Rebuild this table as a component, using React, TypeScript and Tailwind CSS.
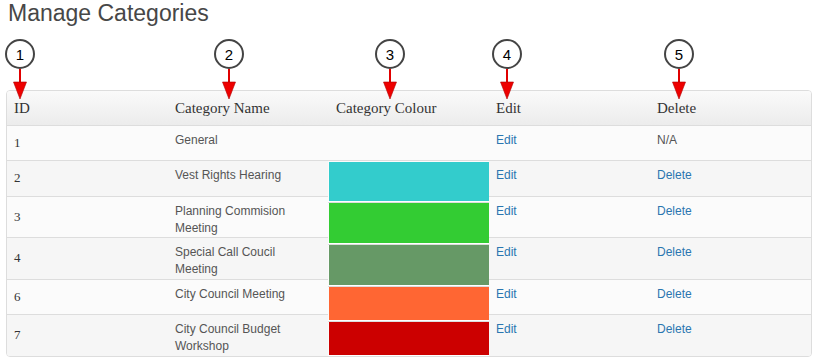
import React from 'react';

type Category = {
  id: number;
  name: string;
  colour?: string;
  swatchHeight?: number;
  deletable: boolean;
};

const categories: Category[] = [
  { id: 1, name: 'General', deletable: false },
  { id: 2, name: 'Vest Rights Hearing', colour: '#33cccc', swatchHeight: 39, deletable: true },
  { id: 3, name: 'Planning Commision Meeting', colour: '#33cc33', swatchHeight: 40, deletable: true },
  { id: 4, name: 'Special Call Coucil Meeting', colour: '#669966', swatchHeight: 40, deletable: true },
  { id: 6, name: 'City Council Meeting', colour: '#ff6633', swatchHeight: 33, deletable: true },
  { id: 7, name: 'City Council Budget Workshop', colour: '#cc0000', swatchHeight: 33, deletable: true },
];

// callout markers drawn over the page
const markers = [
  { n: 1, x: 20 },
  { n: 2, x: 229 },
  { n: 3, x: 390 },
  { n: 4, x: 507 },
  { n: 5, x: 679 },
];

function Marker({ n, x }: { n: number; x: number }) {
  return (
    <div className="absolute top-[39px] flex flex-col items-center w-[30px]" style={{ left: x - 15 }}>
      <div className="w-[30px] h-[30px] rounded-full border-2 border-[#444] bg-white flex items-center justify-center text-[15px] leading-none text-black font-['Liberation_Sans',sans-serif]">
        {n}
      </div>
      <svg width="16" height="30" viewBox="0 0 16 30" className="block">
        <line x1="8" y1="0" x2="8" y2="14" stroke="#e00000" strokeWidth="2" />
        <polygon points="1.5,13 14.5,13 8,30" fill="#ee0000" stroke="#b00000" strokeWidth="0.6" />
      </svg>
    </div>
  );
}

const rowHeights = 'grid-rows-[35px_36px_41px_42px_35px_42px]';
const cols = 'grid-cols-[160px_161px_161px_160px_1fr]';

export default function App() {
  return (
    <div className="relative w-[814px] h-[357px] overflow-hidden bg-white font-['Liberation_Sans',Arial,sans-serif]">
      <h1 className="ml-[8px] mt-[2px] text-[23px] leading-[22px] font-normal text-[#474747]">
        Manage Categories
      </h1>

      {/* Table */}
      <div className="ml-[6px] mt-[66px] w-[806px] border border-[#dddddd] rounded-[4px] overflow-hidden">
        {/* Header */}
        <div
          className={`grid ${cols} h-[34px] items-center bg-gradient-to-b from-[#fafafa] to-[#ececec] text-[15px] leading-[20px] text-[#333] font-['Liberation_Serif',Georgia,serif]`}
        >
          <div className="pl-[7px]">ID</div>
          <div className="pl-2">Category Name</div>
          <div className="pl-2">Category Colour</div>
          <div className="pl-[7px]">Edit</div>
          <div className="pl-2">Delete</div>
        </div>

        {/* Body */}
        <div className={`grid ${cols} ${rowHeights} text-[12px] leading-[16.5px]`}>
          {categories.map((c, i) => {
            const bg = i % 2 === 0 ? 'bg-[#fbfbfb]' : 'bg-[#f6f6f6]';
            return (
              <React.Fragment key={c.id}>
                <div
                  className={`${bg} border-t border-[#dddddd] pl-[7px] flex items-center text-[13px] text-[#333] font-['Liberation_Serif',Georgia,serif]`}
                  style={{ gridRow: i + 1, gridColumn: 1 }}
                >
                  {c.id}
                </div>
                <div
                  className={`${bg} border-t border-[#dddddd] pl-2 pr-4 pt-[6px] text-[#555]`}
                  style={{ gridRow: i + 1, gridColumn: 2 }}
                >
                  {c.name}
                </div>
                {!c.colour && (
                  <div className={`${bg} border-t border-[#dddddd]`} style={{ gridRow: i + 1, gridColumn: 3 }} />
                )}
                <div
                  className={`${bg} border-t border-[#dddddd] pl-[7px] pt-[6px]`}
                  style={{ gridRow: i + 1, gridColumn: 4 }}
                >
                  <a className="text-[#2a76b0]">Edit</a>
                </div>
                <div
                  className={`${bg} border-t border-[#dddddd] pl-2 pt-[6px]`}
                  style={{ gridRow: i + 1, gridColumn: 5 }}
                >
                  {c.deletable ? <a className="text-[#2a76b0]">Delete</a> : <span className="text-[#555]">N/A</span>}
                </div>
              </React.Fragment>
            );
          })}

          {/* colour swatches, stacked in one column */}
          <div className="col-start-3 row-start-2 row-span-5 border-t border-[#dddddd] bg-[#fbfbfb] pt-px flex flex-col">
            {categories
              .filter((c) => c.colour)
              .map((c) => (
                <div key={c.id} className="border-b border-[#dddddd]">
                  <div className="border-b border-white">
                    <div className="ml-px" style={{ height: c.swatchHeight, backgroundColor: c.colour }} />
                  </div>
                </div>
              ))}
          </div>
        </div>
      </div>

      {markers.map((m) => (
        <Marker key={m.n} n={m.n} x={m.x} />
      ))}
    </div>
  );
}
